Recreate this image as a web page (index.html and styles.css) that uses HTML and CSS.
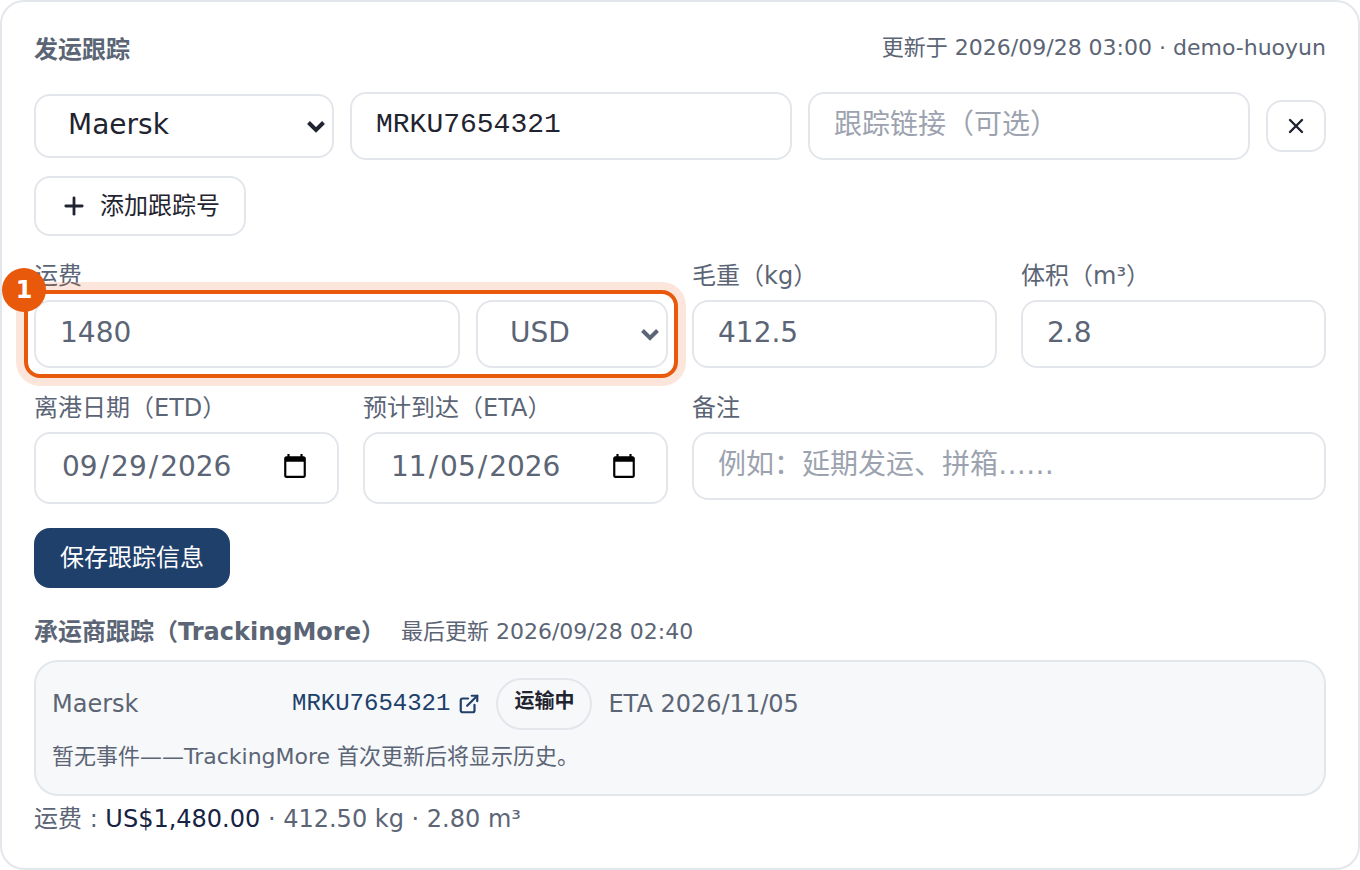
FILE: index.html
```html
<!DOCTYPE html>
<html lang="zh-CN">
<head>
<meta charset="UTF-8">
<meta name="viewport" content="width=device-width, initial-scale=1.0">
<title>发运跟踪</title>
<link rel="stylesheet" href="styles.css">
</head>
<body>
<section class="card">
  <header class="card-head">
    <h2>发运跟踪</h2>
    <span class="meta">更新于 2026/09/28 03:00 · demo-huoyun</span>
  </header>

  <div class="track-row">
    <div class="select carrier">
      <select aria-label="承运商">
        <option>Maersk</option>
        <option>MSC</option>
        <option>COSCO</option>
      </select>
      <svg class="chevron" viewBox="0 0 20 14"><path d="M2.5 2.5 10 10l7.500-7.500"/></svg>
    </div>
    <input class="field mono" type="text" aria-label="跟踪号" value="MRKU7654321">
    <input class="field" type="text" aria-label="跟踪链接" placeholder="跟踪链接（可选）">
    <button class="btn btn-icon" type="button" aria-label="删除">
      <svg class="icon" viewBox="0 0 24 24"><path d="M18 6 6 18"/><path d="m6 6 12 12"/></svg>
    </button>
  </div>

  <button class="btn btn-add" type="button">
    <svg class="icon" viewBox="0 0 24 24"><path d="M5 12h14"/><path d="M12 5v14"/></svg>
    添加跟踪号
  </button>

  <form class="form">
    <div class="cell wide">
      <label for="freight">运费</label>
      <div class="freight">
        <input class="field" id="freight" type="text" inputmode="decimal" value="1480">
        <div class="select currency">
          <select aria-label="币种">
            <option>USD</option>
            <option>CNY</option>
            <option>EUR</option>
          </select>
          <svg class="chevron" viewBox="0 0 20 14"><path d="M2.5 2.5 10 10l7.500-7.500"/></svg>
        </div>
        <div class="callout"><span class="callout-num">1</span></div>
      </div>
    </div>
    <div class="cell">
      <label for="weight">毛重（kg）</label>
      <input class="field" id="weight" type="text" inputmode="decimal" value="412.5">
    </div>
    <div class="cell">
      <label for="volume">体积（m³）</label>
      <input class="field" id="volume" type="text" inputmode="decimal" value="2.8">
    </div>
    <div class="cell">
      <label for="etd">离港日期（ETD）</label>
      <input class="field date" id="etd" type="date" value="2026-09-29">
    </div>
    <div class="cell">
      <label for="eta">预计到达（ETA）</label>
      <input class="field date" id="eta" type="date" value="2026-11-05">
    </div>
    <div class="cell wide">
      <label for="note">备注</label>
      <input class="field" id="note" type="text" placeholder="例如：延期发运、拼箱……">
    </div>
    <button class="btn btn-primary" type="button">保存跟踪信息</button>
  </form>

  <div class="sub-head">
    <h3>承运商跟踪（TrackingMore）</h3>
    <span class="meta">最后更新 2026/09/28 02:40</span>
  </div>
  <div class="panel">
    <div class="panel-row">
      <span class="panel-carrier">Maersk</span>
      <a class="panel-link" href="#">MRKU7654321
        <svg class="icon" viewBox="0 0 24 24"><path d="M15 3h6v6"/><path d="M10 14 21 3"/><path d="M18 13v6a2 2 0 0 1-2 2H5a2 2 0 0 1-2-2V8a2 2 0 0 1 2-2h6"/></svg>
      </a>
      <span class="badge">运输中</span>
      <span>ETA 2026/11/05</span>
    </div>
    <p class="meta">暂无事件——TrackingMore 首次更新后将显示历史。</p>
  </div>
  <p class="summary">运费 : <strong>US$1,480.00</strong> · 412.50 kg · 2.80 m³</p>
</section>
</body>
</html>
```
FILE: styles.css
```css
*{box-sizing:border-box;}
body{margin:0;background:#fff;color:#5b6575;font:24px/36px "DejaVu Sans","Noto Sans CJK SC",sans-serif;}
h2,h3,p{margin:0;font-size:24px;}
input,select,button{font-family:inherit;color:inherit;margin:0;}
svg{flex:none;}

.card{border:2px solid #e3e6eb;border-radius:24px;padding:32px;}
.card-head{display:flex;justify-content:space-between;align-items:center;height:32px;margin-bottom:26px;}
.meta{font-size:22px;line-height:32px;}
.card-head .meta{line-height:28px;height:32px;}

.field{display:block;width:100%;min-width:0;height:68px;padding:0 24px 4px;border:2px solid #e3e6eb;border-radius:16px;background:#fff;font-size:28px;}
.field::placeholder{color:#9ca3af;opacity:1;}
.mono{font-family:"Liberation Mono",monospace;}
.date{height:72px;padding:0 26px 2px 24px;}
.date::-webkit-datetime-edit-month-field,
.date::-webkit-datetime-edit-day-field,
.date::-webkit-datetime-edit-year-field{padding:0 2px;}
.date::-webkit-datetime-edit{padding-bottom:2px;}

.select{position:relative;flex:none;}
.select select{display:block;width:100%;height:100%;padding:0 48px 4px 32px;border:2px solid #e3e6eb;border-radius:16px;background:#fff;font-size:28px;appearance:none;}
.chevron{position:absolute;right:8px;top:50%;width:20px;height:14px;margin-top:-6px;fill:none;stroke:currentColor;stroke-width:4;pointer-events:none;}
.carrier{width:300px;height:64px;}
.currency{width:192px;height:68px;}

.track-row{display:flex;align-items:center;gap:16px;margin-bottom:16px;color:#1f2430;}
.track-row .field{flex:1;}

.btn{display:inline-flex;align-items:center;justify-content:center;height:60px;padding:0 24px;border:2px solid #e3e6eb;border-radius:16px;background:#fff;color:#1f2430;font-size:24px;line-height:36px;cursor:pointer;}
.icon{width:24px;height:24px;fill:none;stroke:currentColor;stroke-width:2.4;stroke-linecap:round;stroke-linejoin:round;}
.btn-icon{flex:none;width:60px;height:52px;padding:0;}
.btn-add{display:flex;gap:12px;margin-bottom:24px;}
.btn-add .icon{width:28px;height:28px;}
.btn-primary{justify-self:start;background:#20406c;border-color:#20406c;color:#fff;}

.form{display:grid;grid-template-columns:repeat(4,minmax(0,1fr));gap:24px;margin-bottom:24px;}
.cell label{display:block;height:40px;line-height:32px;}
.wide{grid-column:span 2;}
.freight{position:relative;display:flex;gap:16px;}

/* numbered marker around the freight fields */
.callout{position:absolute;inset:-10px;border:4px solid #e8590c;border-radius:16px;box-shadow:0 0 0 8px rgba(232,89,12,.15);pointer-events:none;}
.callout-num{position:absolute;left:-26px;top:-26px;width:44px;height:44px;border-radius:50%;background:#e8590c;color:#fff;font-weight:bold;line-height:44px;text-align:center;}

.sub-head{display:flex;align-items:center;gap:16px;padding-top:2px;margin-bottom:10px;}
.panel{padding:16px;border:2px solid #e3e6eb;border-radius:24px;background:#f7f8fa;margin-bottom:6px;}
.panel-row{display:flex;align-items:center;gap:16px;margin-bottom:8px;}
.panel-carrier{width:224px;}
.panel-link{display:flex;align-items:center;gap:8px;color:#20406c;font-family:"Liberation Mono",monospace;font-size:24px;text-decoration:none;}
.panel-link .icon{width:22px;height:22px;}
.badge{height:52px;padding:0 16px;border:2px solid #e3e6eb;border-radius:26px;color:#1f2430;font-size:20px;font-weight:bold;line-height:42px;}
.panel .meta{height:40px;line-height:38px;}
.summary{line-height:34px;}
.summary strong{color:#172343;font-weight:normal;}
```
